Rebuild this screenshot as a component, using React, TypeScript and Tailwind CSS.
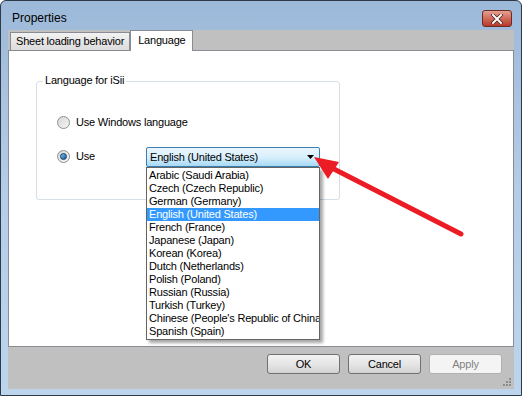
import React from 'react';

const LANGUAGES = [
  'Arabic (Saudi Arabia)',
  'Czech (Czech Republic)',
  'German (Germany)',
  'English (United States)',
  'French (France)',
  'Japanese (Japan)',
  'Korean (Korea)',
  'Dutch (Netherlands)',
  'Polish (Poland)',
  'Russian (Russia)',
  'Turkish (Turkey)',
  "Chinese (People's Republic of China)",
  'Spanish (Spain)',
];

const Radio: React.FC<{ checked?: boolean }> = ({ checked }) => (
  <span className="flex h-[13px] w-[13px] items-center justify-center rounded-full border border-[#8e8f8f] bg-gradient-to-br from-[#d6d6d6] to-[#f7f7f7]">
    {checked && (
      <span className="h-[7px] w-[7px] rounded-full border border-[#0d3e66] bg-gradient-to-br from-[#7ec4f0] to-[#135896]" />
    )}
  </span>
);

const Button: React.FC<{ label: string; disabled?: boolean }> = ({ label, disabled }) => (
  <div
    className={
      disabled
        ? 'flex h-[20px] w-[73px] items-center justify-center rounded-[3px] border border-[#adb2b5] bg-[#f4f4f4] text-[#838383]'
        : 'flex h-[20px] w-[73px] items-center justify-center rounded-[3px] border border-[#707070] bg-gradient-to-b from-[#f2f2f2] via-[#e6e6e6] to-[#d2d2d2] text-black'
    }
  >
    {label}
  </div>
);

export default function App() {
  return (
    <div className="relative h-[396px] w-[522px] overflow-hidden bg-white font-['Liberation_Sans',Arial,sans-serif] text-[11px] leading-[13px] tracking-[-0.2px]">
      {/* Window frame */}
      <div className="flex h-full w-full flex-col rounded-t-[6px] border border-[#2c3a4a] bg-gradient-to-b from-[#9db9d9] via-[#b5cde8] to-[#bcd4ec] px-[7px] pb-[6px]">
        {/* Title bar */}
        <div className="flex h-[29px] shrink-0 items-start justify-between pl-[4px]">
          <span className="mt-[11px] text-[12px] tracking-normal text-black">Properties</span>
          <div className="mr-[2px] mt-[9px] flex h-[17px] w-[30px] items-center justify-center rounded-[3px] border border-[#6b2a22] bg-gradient-to-b from-[#e3a193] via-[#cf6a5a] to-[#b8382a]">
            <svg width="12" height="10" viewBox="0 0 12 10">
              <path d="M2 1 L10 9 M10 1 L2 9" stroke="#4a1a14" strokeWidth="3.4" strokeLinecap="square" />
              <path d="M2 1 L10 9 M10 1 L2 9" stroke="#ffffff" strokeWidth="2" strokeLinecap="square" />
            </svg>
          </div>
        </div>

        {/* Client area */}
        <div className="flex flex-1 flex-col bg-[#c0c0c0]">
          {/* Tabs */}
          <div className="flex h-[20px] shrink-0 items-end pl-[2px]">
            <div className="flex h-[18px] items-center border border-b-0 border-[#898c95] bg-gradient-to-b from-[#f2f2f2] to-[#dcdcdc] px-[5px] text-black">
              Sheet loading behavior
            </div>
            <div className="relative z-10 -mb-px flex h-[21px] items-center border border-b-0 border-[#898c95] bg-white px-[7px] pb-[2px] text-black">
              Language
            </div>
          </div>

          {/* Page */}
          <div className="relative h-[297px] shrink-0 border border-[#898c95] bg-white">
            <div className="ml-[27px] mt-[30px] h-[119px] w-[304px] rounded-[3px] border border-[#d5dfe5]">
              <div className="-mt-[8px] ml-[6px] w-fit bg-white px-[2px] text-black">Language for iSii</div>
              <div className="ml-[20px] mt-[29px] flex items-center gap-[6px]">
                <Radio />
                <span>Use Windows language</span>
              </div>
              <div className="ml-[20px] mt-[21px] flex items-center gap-[6px]">
                <Radio checked />
                <span>Use</span>
              </div>
            </div>

            {/* Combo box */}
            <div className="absolute left-[137px] top-[96px] flex h-[20px] w-[174px] items-center justify-between rounded-[2px] border border-[#3c7fb1] bg-gradient-to-b from-[#eaf6fd] via-[#d9f0fc] to-[#a7d9f5] pl-[3px] pr-[5px]">
              <span className="text-black">English (United States)</span>
              <svg width="7" height="4" viewBox="0 0 7 4">
                <path d="M0 0 H7 L3.5 4 Z" fill="#000" />
              </svg>
            </div>

            {/* Dropdown list */}
            <div className="absolute left-[137px] top-[116px] w-[174px] border border-[#646464] bg-white py-[1px] shadow-[3px_3px_3px_rgba(0,0,0,0.35)]">
              {LANGUAGES.map((lang) => (
                <div
                  key={lang}
                  className={
                    lang === 'English (United States)'
                      ? 'h-[13px] overflow-hidden whitespace-nowrap bg-[#3399ff] pl-[2px] text-white'
                      : 'h-[13px] overflow-hidden whitespace-nowrap pl-[2px] text-black'
                  }
                >
                  {lang}
                </div>
              ))}
            </div>
          </div>

          {/* Footer buttons */}
          <div className="relative flex flex-1 items-start justify-end gap-[8px] pr-[12px] pt-[7px]">
            <Button label="OK" />
            <Button label="Cancel" />
            <Button label="Apply" disabled />
            <svg className="absolute bottom-[2px] right-[2px]" width="10" height="10" viewBox="0 0 10 10">
              <g fill="#8c8c8c">
                <rect x="7" y="1" width="2" height="2" />
                <rect x="4" y="4" width="2" height="2" />
                <rect x="7" y="4" width="2" height="2" />
                <rect x="1" y="7" width="2" height="2" />
                <rect x="4" y="7" width="2" height="2" />
                <rect x="7" y="7" width="2" height="2" />
              </g>
            </svg>
          </div>
        </div>
      </div>

      {/* Red annotation arrow */}
      <svg className="pointer-events-none absolute left-0 top-0" width="522" height="396" viewBox="0 0 522 396">
        <line x1="461" y1="234" x2="330" y2="167" stroke="#ec1c24" strokeWidth="5" strokeLinecap="round" />
        <path d="M314 157 L339 162 L328 179 Z" fill="#ec1c24" />
      </svg>
    </div>
  );
}
